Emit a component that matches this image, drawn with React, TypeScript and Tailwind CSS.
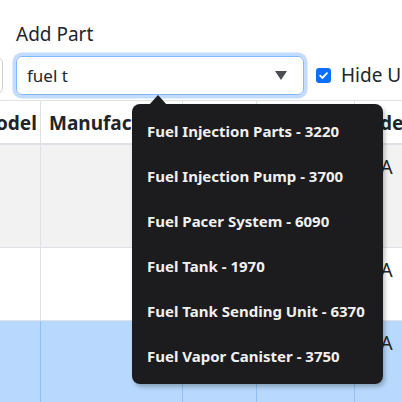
import React from "react";

const items = [
  "Fuel Injection Parts - 3220",
  "Fuel Injection Pump - 3700",
  "Fuel Pacer System - 6090",
  "Fuel Tank - 1970",
  "Fuel Tank Sending Unit - 6370",
  "Fuel Vapor Canister - 3750",
];

function Row({ bg, line, h, text }: { bg: string; line: string; h: string; text: string }) {
  return (
    <div className={`flex ${bg} ${h} border-b ${line}`}>
      <div className={`w-[71px] shrink-0 border-r ${line}`} />
      <div className={`w-[142px] shrink-0 border-r ${line}`} />
      <div className={`w-[74px] shrink-0 border-r ${line}`} />
      <div className={`w-[98px] shrink-0 border-r ${line}`} />
      <div className="flex-1 pl-[4px] pt-[10px] text-[19px] leading-[24px] text-[#212529] whitespace-nowrap">{text}</div>
    </div>
  );
}

export default function App() {
  return (
    <div
      className="relative w-[402px] h-[402px] overflow-hidden bg-white text-[#212529]"
      style={{ fontFamily: '"Noto Sans", "Open Sans", sans-serif' }}
    >
      <div className="pl-[16px] pt-[20px] text-[19px] leading-[28px]">Add Part</div>
      <div className="flex items-center mt-[8px] h-[39px]">
        <div className="w-[40px] ml-[-37px] h-[37px] border border-[#ced4da] rounded-[6px] shrink-0" />
        <div className="ml-[13px] w-[288px] h-[39px] shrink-0 border border-[#86b7fe] rounded-[6px] shadow-[0_0_0_3.5px_rgba(13,110,253,0.25)] flex items-center pl-[10px] pr-[16px]">
          <span className="text-[17px] text-[#212529] flex-1">fuel t</span>
          <svg width="12" height="9" viewBox="0 0 12 9">
            <path d="M0 0 L12 0 L6 9 Z" fill="#4a4d52" />
          </svg>
        </div>
        <div className="ml-[12px] w-[15px] h-[15px] rounded-[3px] bg-[#0d6efd] flex items-center justify-center shrink-0">
          <svg width="11" height="11" viewBox="0 0 12 12">
            <path d="M2.3 6.2 L4.9 8.7 L9.8 3.4" stroke="white" strokeWidth="2" fill="none" strokeLinecap="round" strokeLinejoin="round" />
          </svg>
        </div>
        <span className="ml-[10px] text-[19px] whitespace-nowrap">Hide Unused</span>
      </div>
      <div className="mt-[5px] ml-[-30px] w-[480px] border-t border-[#dee2e6]">
        <div className="flex h-[44px] border-b-2 border-[#dee2e6] font-bold text-[19px]">
          <div className="w-[71px] shrink-0 border-r border-[#dee2e6] pl-[8px] pt-[8px] whitespace-nowrap">Model</div>
          <div className="w-[142px] shrink-0 border-r border-[#dee2e6] pl-[8px] pt-[8px] overflow-hidden whitespace-nowrap">Manufacturer</div>
          <div className="w-[74px] shrink-0 border-r border-[#dee2e6] pl-[8px] pt-[8px]"></div>
          <div className="w-[98px] shrink-0 border-r border-[#dee2e6] pl-[8px] pt-[8px]"></div>
          <div className="flex-1 pl-[1px] pt-[8px] whitespace-nowrap">Code</div>
        </div>
        <Row bg="bg-[#f2f2f2]" line="border-[#dee2e6]" h="h-[103px]" text="N/A" />
        <Row bg="bg-white" line="border-[#dee2e6]" h="h-[73px]" text="N/A" />
        <Row bg="bg-[#b8d9fd]" line="border-[#8fc0f7]" h="h-[90px]" text="N/A" />
      </div>

      <div className="absolute left-[132px] top-[104px] w-[251px] h-[280px] rounded-[8px] bg-[#1c1c1e] py-[5px] shadow-[2px_3px_4px_rgba(0,0,0,0.25)]">
        <div className="absolute left-[17px] top-[-9px] w-0 h-0 border-l-[9px] border-r-[9px] border-b-[10px] border-l-transparent border-r-transparent border-b-[#1c1c1e]" />
        {items.map((t) => (
          <div key={t} className="h-[45px] flex items-center pl-[15px] text-[15px] font-bold text-[#f0f0f0] whitespace-nowrap">
            {t}
          </div>
        ))}
      </div>
    </div>
  );
}
